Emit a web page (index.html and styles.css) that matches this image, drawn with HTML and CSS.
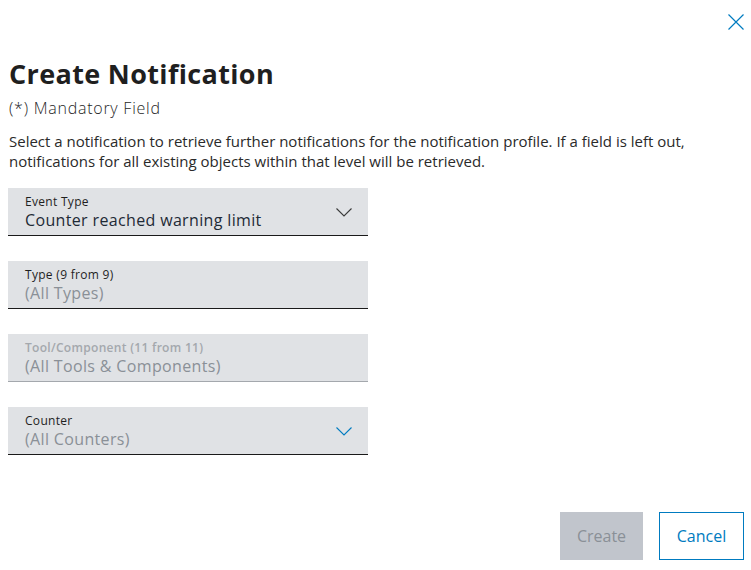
FILE: index.html
```html
<!DOCTYPE html>
<html lang="en">
<head>
    <meta charset="UTF-8">
    <meta name="viewport" content="width=device-width, initial-scale=1.0">
    <title>Create Notification</title>
    <link rel="stylesheet" href="styles.css">
</head>
<body>
    <div class="dialog">
        <div class="topbar">
            <button class="close" aria-label="Close">
                <svg width="16" height="16" viewBox="0 0 16 16"><path d="M0.5 0.5 L15.5 15.5 M15.5 0.5 L0.5 15.5" stroke="#007bc0" stroke-width="1.2" fill="none"/></svg>
            </button>
        </div>
        <h1 class="title">Create Notification</h1>
        <p class="mandatory">(*) Mandatory Field</p>
        <p class="intro">Select a notification to retrieve further notifications for the notification profile. If a field is left out, notifications for all existing objects within that level will be retrieved.</p>

        <div class="fields">
            <div class="field">
                <div class="field-text">
                    <span class="label">Event Type</span>
                    <span class="value">Counter reached warning limit</span>
                </div>
                <svg class="chevron" width="16" height="9" viewBox="0 0 16 9"><path d="M0.5 0.5 L8 8 L15.5 0.5" stroke="#3a3a3a" stroke-width="1.1" fill="none"/></svg>
            </div>
            <div class="field">
                <div class="field-text">
                    <span class="label">Type (9 from 9)</span>
                    <span class="value placeholder">(All Types)</span>
                </div>
            </div>
            <div class="field disabled">
                <div class="field-text">
                    <span class="label">Tool/Component (11 from 11)</span>
                    <span class="value placeholder">(All Tools &amp; Components)</span>
                </div>
            </div>
            <div class="field">
                <div class="field-text">
                    <span class="label">Counter</span>
                    <span class="value placeholder">(All Counters)</span>
                </div>
                <svg class="chevron" width="16" height="9" viewBox="0 0 16 9"><path d="M0.5 0.5 L8 8 L15.5 0.5" stroke="#007bc0" stroke-width="1.1" fill="none"/></svg>
            </div>
        </div>

        <div class="actions">
            <button class="btn btn-primary" disabled>Create</button>
            <button class="btn btn-secondary">Cancel</button>
        </div>
    </div>
</body>
</html>
```

FILE: styles.css
```css
body {
    margin: 0;
    font-family: "Open Sans", "Noto Sans", sans-serif;
    color: #1a1a1a;
    background: #fff;
}
.dialog {
    width: 751px;
    height: 570px;
    box-sizing: border-box;
    padding: 0 7px 10px 8px;
    display: flex;
    flex-direction: column;
}
.topbar {
    display: flex;
    justify-content: flex-end;
    padding-top: 14px;
    height: 18px;
}
.close {
    border: none;
    background: none;
    padding: 0;
    width: 16px;
    height: 16px;
    cursor: pointer;
}
.title {
    margin: 25px 0 0 1px;
    font-size: 27px;
    line-height: 34px;
    font-weight: 700;
    letter-spacing: 0.35px;
    color: #1f1f1f;
}
.mandatory {
    margin: 7px 0 0 1px;
    font-size: 16px;
    line-height: 20px;
    font-weight: 300;
    letter-spacing: 0.75px;
    color: #1f1f1f;
}
.intro {
    margin: 13px 0 0 1px;
    font-size: 15px;
    line-height: 20px;
    color: #2a2a2a;
}
.fields {
    margin-top: 17px;
    display: flex;
    flex-direction: column;
    gap: 25px;
}
.field {
    width: 360px;
    height: 47px;
    box-sizing: content-box;
    background: #e0e2e5;
    border-bottom: 1px solid #1a1a1a;
    display: flex;
    align-items: center;
    justify-content: space-between;
    padding: 0;
}
.field-text {
    display: flex;
    flex-direction: column;
    padding-left: 17px;
    padding-top: 1px;
}
.label {
    font-size: 12px;
    line-height: 15px;
    letter-spacing: 0.3px;
    color: #1f1f1f;
}
.value {
    font-size: 16px;
    line-height: 22px;
    letter-spacing: 0.35px;
    color: #1e2a36;
}
.placeholder {
    color: #8a9097;
}
.field.disabled {
    border-bottom-color: #a4a8ad;
}
.field.disabled .label {
    color: #a4a8ad;
    font-weight: 600;
}
.chevron {
    margin-right: 16px;
    margin-top: 2px;
}
.actions {
    margin-top: auto;
    display: flex;
    justify-content: flex-end;
    gap: 16px;
}
.btn {
    height: 48px;
    font-family: inherit;
    font-size: 16px;
    padding: 0 12px;
    box-sizing: border-box;
}
.btn-primary {
    width: 83px;
    background: #c1c5cc;
    color: #8a9097;
    border: none;
}
.btn-secondary {
    width: 85px;
    background: #fff;
    color: #007bc0;
    border: 1px solid #007bc0;
    cursor: pointer;
}
```
